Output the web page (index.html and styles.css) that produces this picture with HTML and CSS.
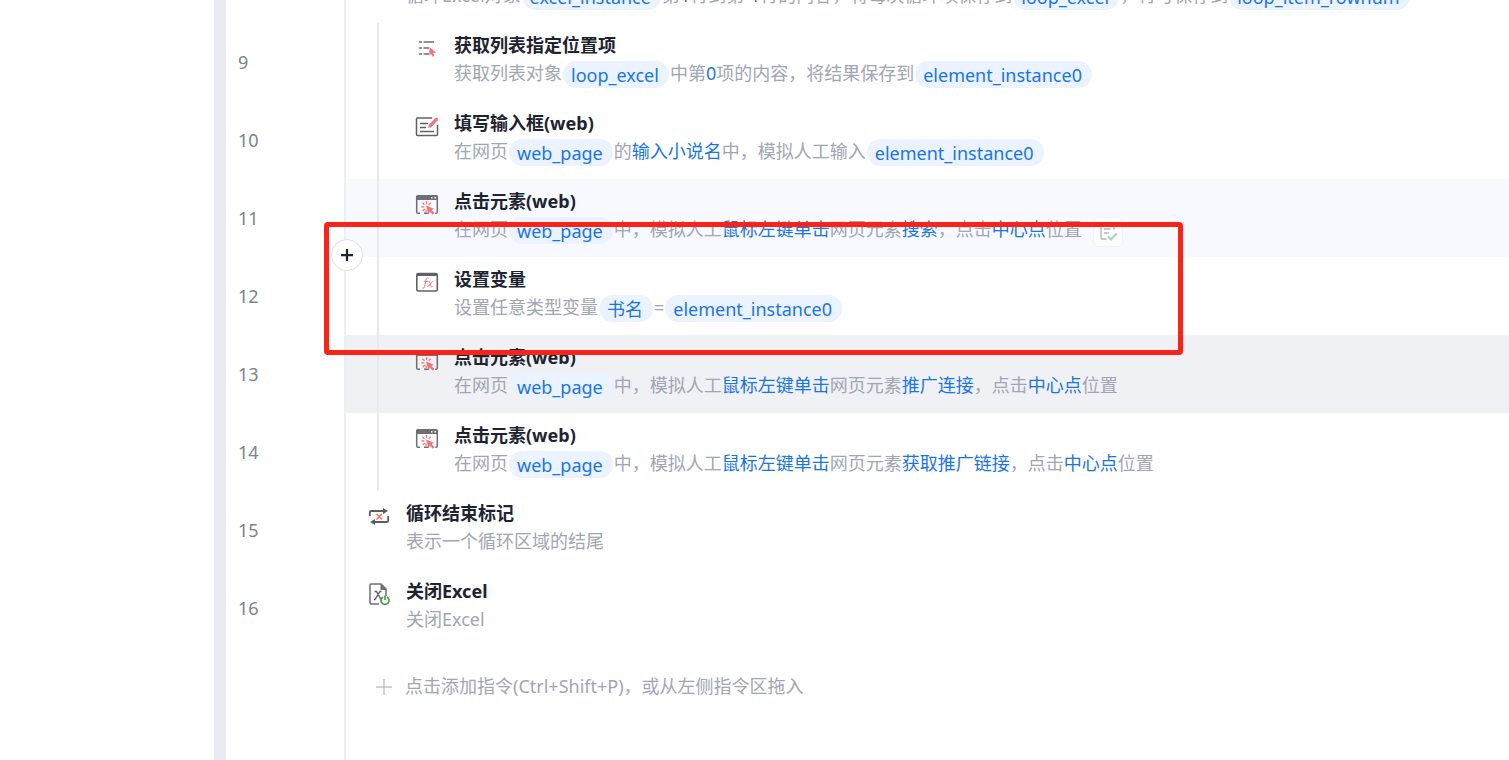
FILE: index.html
```html
<!DOCTYPE html>
<html lang="zh-CN">
<head>
<meta charset="utf-8">
<title>流程编辑</title>
<link rel="stylesheet" href="styles.css">
</head>
<body>
<svg class="defs" width="0" height="0" aria-hidden="true">
  <symbol id="i-list" viewBox="0 0 24 24">
    <g stroke="#6d6e76" stroke-width="1.5" fill="none"><path d="M4 6h3M8.500 6H19M4 12h3M8.500 12H14M4 18h3M8.500 18H14"/></g>
    <path d="M14.500 11l6.500 5.500-3 .4 1.500 3-1.800.8-1.400-3-2 1.800z" fill="#f17476"/>
  </symbol>
  <symbol id="i-input" viewBox="0 0 24 24">
    <path d="M17 4H2.500a1 1 0 0 0-1 1v15.500a1 1 0 0 0 1 1h19a1 1 0 0 0 1-1V11" stroke="#606168" stroke-width="1.500" fill="none"/>
    <path d="M5 9.500h8M5 13.500h6M5 17.500h14" stroke="#606168" stroke-width="1.500"/>
    <path d="M13 14l1-3.500L20.500 4a1.200 1.200 0 0 1 1.800 0l.5.5a1.200 1.200 0 0 1 0 1.800L16.500 13z" fill="#f17476"/>
  </symbol>
  <symbol id="i-click" viewBox="0 0 24 24">
    <path d="M5 21.200H3a1.300 1.300 0 0 1-1.300-1.200V5M22.300 5v15a1.300 1.300 0 0 1-1.300 1.200h-.8M9 21.200h5" stroke="#6d6e76" stroke-width="1.500" fill="none"/>
    <path d="M1 8V4.500A1.500 1.500 0 0 1 2.500 3h19A1.500 1.500 0 0 1 23 4.500V8z" fill="#6d6e76"/>
    <path d="M16 5.800h1.500M19.500 5.800H21" stroke="#fff" stroke-width="1.500"/>
    <path d="M11.500 9v3.200M7.500 10.800l2 2M6.300 14.800h3M7.800 19l2-2M15.600 10.800l-1.800 2M11 17.500V20" stroke="#f17476" stroke-width="1.300"/>
    <path d="M11 13.500l8 3.200-2.500 1.300 3 3-1.700 1.700-3-3-1.200 2.500z" fill="#f17476"/>
  </symbol>
  <symbol id="i-var" viewBox="0 0 24 24">
    <rect x="1.800" y="3.500" width="20.500" height="17.500" rx="1.500" stroke="#606168" stroke-width="1.600" fill="none"/>
    <path d="M2 5h20" stroke="#606168" stroke-width="2"/>
    <path d="M13.500 8c-1.500-.7-2.200.2-2.500 1.800l-1.300 6.500c-.3 1.500-1 2.300-2.400 1.700M8.800 11.500h4M13.300 12c1.200-.8 1.600 0 1.900 1.200l.6 2.600c.3 1.200.8 1.600 1.800.8M17.800 11.600c-1.400-.2-3.800 5.300-5.400 5.100" stroke="#ee7778" stroke-width="1" fill="none"/>
  </symbol>
  <symbol id="i-loop" viewBox="0 0 24 24">
    <path d="M2.800 12V8.500A1.500 1.500 0 0 1 4.300 7H17M21.200 12v4.500a1.500 1.500 0 0 1-1.500 1.500H7" stroke="#5c5c60" stroke-width="1.800" fill="none"/>
    <path d="M16 4v6L21 7zM8 15v6L3 18z" fill="#5c5c60"/>
    <path d="M9.500 10l5.500 5.500M15 10l-5.500 5.500" stroke="#f17476" stroke-width="1.600"/>
  </symbol>
  <symbol id="i-excel" viewBox="0 0 24 24">
    <path d="M12 22H4a1 1 0 0 1-1-1V3a1 1 0 0 1 1-1h10l5 5v7" stroke="#6d6e76" stroke-width="1.500" fill="none"/>
    <path d="M13.500 2l6 6h-6z" fill="#6d6e76"/>
    <path d="M7.500 9.500h2l4.500 8h1M14.500 9.500h-1.500l-5 8H7" stroke="#606168" stroke-width="1.400" fill="none"/>
    <path d="M16 15a4 4 0 1 0 4 0M18 13.500v4.500" stroke="#4b9e45" stroke-width="1.700" fill="none"/>
  </symbol>
  <symbol id="i-plus" viewBox="0 0 16 16"><path d="M8 0v16M0 8h16" stroke="currentColor" fill="none"/></symbol>
  <symbol id="i-check" viewBox="0 0 20 20">
    <path d="M8.500 17H4a1 1 0 0 1-1-1V4a1 1 0 0 1 1-1h11a1 1 0 0 1 1 1v4M6 7h6.500M6 11h5" stroke="#c5c7ca" stroke-width="1.800" fill="none"/>
    <path d="M10 14.500l3 3 5.500-6" stroke="#a5d9b5" stroke-width="2" fill="none"/>
  </symbol>
</svg>

<div class="app">
  <aside class="sidebar"></aside>
  <div class="splitter"></div>
  <main class="editor">
    <section class="row row--cut">
      <div class="row__num"></div>
      <div class="row__body">
        <div class="row__text">
          <p class="desc">循环Excel对象<span class="pill">excel_instance</span>第<span class="param">1</span>行到第<span class="param">-1</span>行的内容，将每次循环项保存到<span class="pill">loop_excel</span>，行号保存到<span class="pill">loop_item_rownum</span></p>
        </div>
      </div>
    </section>

    <section class="row row--nested">
      <div class="row__num">9</div>
      <div class="row__body">
        <svg class="icon"><use href="#i-list"/></svg>
        <div class="row__text">
          <h3 class="title">获取列表指定位置项</h3>
          <p class="desc">获取列表对象<span class="pill">loop_excel</span>中第<span class="param">0</span>项的内容，将结果保存到<span class="pill">element_instance0</span></p>
        </div>
      </div>
    </section>

    <section class="row row--nested">
      <div class="row__num">10</div>
      <div class="row__body">
        <svg class="icon"><use href="#i-input"/></svg>
        <div class="row__text">
          <h3 class="title">填写输入框(web)</h3>
          <p class="desc">在网页<span class="pill">web_page</span>的<span class="param">输入小说名</span>中，模拟人工输入<span class="pill">element_instance0</span></p>
        </div>
      </div>
    </section>

    <section class="row row--nested row--hover">
      <div class="row__num">11</div>
      <div class="row__body">
        <svg class="icon"><use href="#i-click"/></svg>
        <div class="row__text">
          <h3 class="title">点击元素(web)</h3>
          <p class="desc">在网页<span class="pill">web_page</span>中，模拟人工<span class="param">鼠标左键单击</span>网页元素<span class="param">搜索</span>，点击<span class="param">中心点</span>位置<button class="check" type="button" aria-label="校验"><svg width="20" height="20"><use href="#i-check"/></svg></button></p>
        </div>
      </div>
    </section>

    <section class="row row--nested row--marked">
      <div class="row__num">12</div>
      <div class="row__body">
        <svg class="icon"><use href="#i-var"/></svg>
        <div class="row__text">
          <h3 class="title">设置变量</h3>
          <p class="desc">设置任意类型变量<span class="pill">书名</span>=<span class="pill">element_instance0</span></p>
        </div>
      </div>
      <button class="insert" type="button" aria-label="插入指令"><svg width="12" height="12"><use href="#i-plus"/></svg></button>
      <div class="marker"></div>
    </section>

    <section class="row row--nested row--selected">
      <div class="row__num">13</div>
      <div class="row__body">
        <svg class="icon"><use href="#i-click"/></svg>
        <div class="row__text">
          <h3 class="title">点击元素(web)</h3>
          <p class="desc">在网页<span class="pill">web_page</span>中，模拟人工<span class="param">鼠标左键单击</span>网页元素<span class="param">推广连接</span>，点击<span class="param">中心点</span>位置</p>
        </div>
      </div>
    </section>

    <section class="row row--nested">
      <div class="row__num">14</div>
      <div class="row__body">
        <svg class="icon"><use href="#i-click"/></svg>
        <div class="row__text">
          <h3 class="title">点击元素(web)</h3>
          <p class="desc">在网页<span class="pill">web_page</span>中，模拟人工<span class="param">鼠标左键单击</span>网页元素<span class="param">获取推广链接</span>，点击<span class="param">中心点</span>位置</p>
        </div>
      </div>
    </section>

    <section class="row">
      <div class="row__num">15</div>
      <div class="row__body">
        <svg class="icon"><use href="#i-loop"/></svg>
        <div class="row__text">
          <h3 class="title">循环结束标记</h3>
          <p class="desc">表示一个循环区域的结尾</p>
        </div>
      </div>
    </section>

    <section class="row">
      <div class="row__num">16</div>
      <div class="row__body">
        <svg class="icon"><use href="#i-excel"/></svg>
        <div class="row__text">
          <h3 class="title">关闭Excel</h3>
          <p class="desc">关闭Excel</p>
        </div>
      </div>
    </section>

    <div class="row row--fill">
      <div class="row__num"></div>
      <div class="row__body">
        <button class="add" type="button"><svg width="16" height="16"><use href="#i-plus"/></svg>点击添加指令(Ctrl+Shift+P)，或从左侧指令区拖入</button>
      </div>
    </div>
  </main>
</div>
</body>
</html>
```
FILE: styles.css
```css
* { box-sizing: border-box; }

body {
  margin: 0;
  background: #fff;
  color: #1d2430;
  font-family: "Noto Sans", "Noto Sans CJK SC", sans-serif;
  font-size: 18px;
}

button {
  padding: 0;
  border: 0;
  background: none;
  color: inherit;
  font: inherit;
}

.defs { position: absolute; }

.app {
  display: flex;
  height: 100vh;
  overflow: hidden;
}

.sidebar { flex: 0 0 214px; }
.splitter { flex: 0 0 12px; background: #e9ebf0; }

.editor {
  flex: 1;
  min-width: 0;
  display: flex;
  flex-direction: column;
}

.row {
  display: flex;
  flex-shrink: 0;
  position: relative;
}

.row__num {
  flex: 0 0 120px;
  display: flex;
  align-items: center;
  padding-left: 12px;
  border-right: 2px solid #eeeff4;
  color: #7b848e;
}

.row__body {
  flex: 1;
  min-width: 0;
  display: flex;
  gap: 15px;
  padding: 9px 0 13px 21px;
}

.row--nested .row__body {
  padding-left: 69px;
  background: linear-gradient(#e9e9ec, #e9e9ec) 31px 0 / 2px 100% no-repeat;
}

.row--hover .row__body { background-color: #f8f9fe; }
.row--selected .row__body { background-color: #f0f1f5; }

/* Row scrolled partly out of view: only the foot of its description shows. */
.row--cut { height: 23px; overflow: hidden; }
.row--cut .row__body {
  align-items: flex-end;
  padding-left: 60px;
}

.row--fill { flex: 1 0 auto; }
.row--fill .row__body {
  align-items: flex-start;
  padding: 26px 0 0 30px;
}

.icon {
  flex: none;
  width: 24px;
  height: 24px;
  margin-top: 4px;
}

.title {
  margin: 0;
  font-size: 18px;
  font-weight: 700;
  line-height: 27px;
}

.desc {
  display: flex;
  align-items: center;
  height: 29px;
  margin: 0;
  color: #a0a6b3;
  line-height: 27px;
  white-space: pre;
}

.param { color: #1b76dc; }

.pill {
  margin: 2px 1px 0;
  padding: 2px 10px 0 8px;
  border-radius: 14px;
  background: #eaf3ff;
  color: #1b76dc;
  line-height: 25px;
}

.check {
  display: grid;
  place-items: center;
  width: 30px;
  height: 30px;
  margin: 4px 0 0 11px;
  border: 1px solid #f1f2f5;
  border-radius: 6px;
  background: #fbfcfe;
}

.insert {
  position: absolute;
  z-index: 2;
  top: -18px;
  left: 105px;
  display: grid;
  place-items: center;
  width: 32px;
  height: 32px;
  border: 1px solid #dedede;
  border-radius: 50%;
  background: #fff;
}

.insert svg { stroke-width: 3; }

.marker {
  position: absolute;
  z-index: 1;
  top: -35px;
  bottom: -20px;
  left: 98px;
  width: 859px;
  border: 5px solid #fa2318;
  border-radius: 4px;
  pointer-events: none;
}

.add {
  display: flex;
  align-items: center;
  gap: 13px;
  color: #a0a6b3;
  line-height: 27px;
  white-space: nowrap;
}
```
